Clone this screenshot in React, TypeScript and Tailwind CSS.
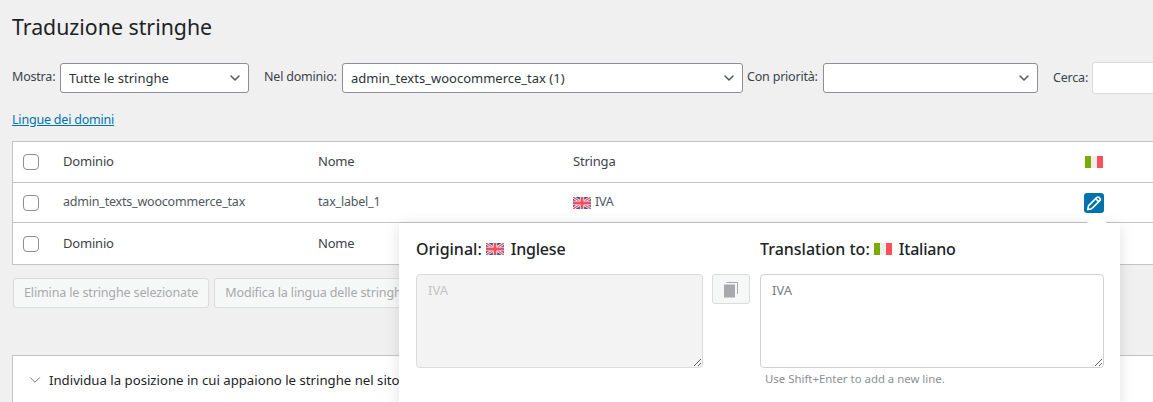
import { ChevronDown } from "lucide-react";

const FONT = "font-['Noto_Sans','Open_Sans',sans-serif]";
const COLS = "grid-cols-[40px_255px_255px_512px_1fr]";

function UkFlag() {
  return (
    <svg width="18" height="12" viewBox="0 0 18 12" className="shrink-0">
      <rect width="18" height="12" fill="#27559f" />
      <path d="M0 0L18 12M18 0L0 12" stroke="#f6f6f6" strokeWidth="2.8" />
      <path d="M0 0L18 12M18 0L0 12" stroke="#f0505f" strokeWidth="1.3" />
      <path d="M9 0V12M0 6H18" stroke="#f6f6f6" strokeWidth="4.4" />
      <path d="M9 0V12M0 6H18" stroke="#ef4f5e" strokeWidth="2.8" />
    </svg>
  );
}

function ItFlag() {
  return (
    <span className="flex h-3 w-[18px] shrink-0">
      <span className="flex-1 bg-[#78ac00]" />
      <span className="flex-1 bg-[#eeeeee]" />
      <span className="flex-1 bg-[#ff4f58]" />
    </span>
  );
}

function Check() {
  return (
    <input
      type="checkbox"
      className="h-4 w-4 appearance-none rounded-[4px] border border-[#8c8f94] bg-white"
    />
  );
}

function FakeSelect({ value, width }: { value?: string; width: string }) {
  return (
    <div
      className={`flex h-[30px] shrink-0 items-center justify-between rounded-[3px] border border-[#8c8f94] bg-white pl-2 pr-[5px] text-[13px] text-[#2c3338] ${width}`}
    >
      <span className="pt-[2px]">{value}</span>
      <ChevronDown size={16} strokeWidth={2.2} className="text-[#50575e]" />
    </div>
  );
}

function Label({ children, className }: { children: React.ReactNode; className: string }) {
  return (
    <span className={`shrink-0 -translate-y-px whitespace-nowrap text-[12.5px] tracking-[-0.2px] ${className}`}>
      {children}
    </span>
  );
}

export default function App() {
  return (
    <div className={`relative h-[402px] w-[1153px] overflow-hidden bg-[#f0f0f1] text-[12.5px] tracking-[-0.2px] text-[#3c434a] ${FONT}`}>
      <div className="w-[1180px] pl-3">
        <h1 className="pt-[11px] text-[21.3px] leading-[31px] tracking-normal text-[#1d2327]">Traduzione stringhe</h1>

        {/* Filters */}
        <div className="mt-[20px] flex items-center tracking-normal">
          <Label className="w-[48px]">Mostra:</Label>
          <FakeSelect value="Tutte le stringhe" width="w-[189px]" />
          <Label className="ml-[15px] w-[78px]">Nel dominio:</Label>
          <FakeSelect value="admin_texts_woocommerce_tax (1)" width="w-[401px]" />
          <Label className="ml-[4px] w-[76px]">Con priorità:</Label>
          <FakeSelect width="w-[215px]" />
          <Label className="ml-[15px] w-[39px] translate-y-0">Cerca:</Label>
          <div className="h-[32px] w-[100px] rounded-[3px] border border-[#dcdcde] bg-white" />
        </div>

        <div className="mt-[17px] leading-[18px]">
          <a href="#" className="text-[#0073aa] underline">Lingue dei domini</a>
        </div>

        {/* Strings table */}
        <div className="mt-[12px] h-[124px] border border-[#c3c4c7] bg-white">
          <div className={`grid h-[41px] ${COLS} items-center border-b border-[#c3c4c7] pl-[10px] text-[13px]`}>
            <Check />
            <span>Dominio</span>
            <span>Nome</span>
            <span>Stringa</span>
            <ItFlag />
          </div>
          <div className={`grid h-10 ${COLS} items-center border-b border-[#c3c4c7] pl-[10px] text-[#50575e]`}>
            <Check />
            <span>admin_texts_woocommerce_tax</span>
            <span>tax_label_1</span>
            <span className="flex items-center gap-[4px]">
              <UkFlag />
              IVA
            </span>
            <button className="-ml-px flex h-5 w-5 items-center justify-center rounded-[3px] bg-[#0073aa]">
              <svg width="18" height="18" viewBox="0 0 16 16" fill="none" stroke="white" strokeWidth="1.5" strokeLinejoin="round">
                <path d="M3.2 10.4L10.6 3a1.2 1.2 0 0 1 1.7 0l1 1a1.2 1.2 0 0 1 0 1.7L5.9 13.1 2.5 13.8z" />
                <path d="M9.6 4.2l2.5 2.5" />
              </svg>
            </button>
          </div>
          <div className={`grid h-[41px] ${COLS} items-center pl-[10px] text-[13px]`}>
            <Check />
            <span>Dominio</span>
            <span>Nome</span>
          </div>
        </div>

        {/* Bulk actions */}
        <div className="mt-[13px] flex gap-[5px] pl-px tracking-[-0.13px]">
          <button className="h-[30px] rounded-[3px] border border-[#dcdcde] bg-[#f6f7f7] px-[10px] pt-px text-[#a7aaad]">
            Elimina le stringhe selezionate
          </button>
          <button className="h-[30px] whitespace-nowrap rounded-[3px] border border-[#dcdcde] bg-[#f6f7f7] px-[10px] pt-px text-[#a7aaad]">
            Modifica la lingua delle stringhe selezionate
          </button>
        </div>

        {/* Location panel */}
        <div className="mt-[47px] h-[60px] border border-[#c3c4c7] bg-white pl-[13px] pt-[14px]">
          <div className="flex items-center gap-[5px] text-[13.2px] leading-5 tracking-normal text-[#1d2327]">
            <ChevronDown size={18} strokeWidth={1.2} className="text-[#646970]" />
            Individua la posizione in cui appaiono le stringhe nel sito
          </div>
        </div>
      </div>

      {/* Translation popover */}
      <div className="absolute left-[399px] top-[223px] h-[190px] w-[721px] bg-white pl-[17px] pr-4 pt-[14px] tracking-normal shadow-[0_2px_14px_rgba(0,0,0,0.12)]">
        <div className="absolute right-[13px] top-[-10px] h-0 w-0 border-x-[10px] border-b-[10px] border-x-transparent border-b-white" />
        <div className="grid grid-cols-[287px_57px_344px]">
          <div className="flex items-center gap-[4px] text-[16px] font-medium leading-6 text-[#1d2327]">
            Original: <UkFlag /> <span className="ml-[3px] tracking-[-0.2px]">Inglese</span>
          </div>
          <div />
          <div className="flex items-center gap-[4px] text-[16px] font-medium leading-6 text-[#1d2327]">
            Translation to: <ItFlag /> <span className="ml-[3px] tracking-[-0.2px]">Italiano</span>
          </div>
        </div>
        <div className="mt-[13px] grid grid-cols-[287px_57px_344px]">
          <textarea
            disabled
            defaultValue="IVA"
            className="h-[94px] rounded-[4px] border border-[#dcdcde] bg-[#f3f3f3] px-[11px] py-[6px] text-[13px] text-[#c3c4c7] outline-none"
          />
          <div className="pl-[9px]">
            <button className="flex h-[30px] w-[38px] items-center justify-center rounded-[3px] border border-[#dcdcde] bg-[#f6f7f7]">
              <svg width="16" height="17" viewBox="0 0 16 17">
                <path d="M3.5 1.5H14.5V13" fill="none" stroke="#a7aaad" strokeWidth="1" />
                <rect x="1" y="3.5" width="11" height="13" fill="#a7aaad" />
              </svg>
            </button>
          </div>
          <textarea
            defaultValue="IVA"
            className="h-[94px] rounded-[4px] border border-[#d0d1d3] bg-white px-[11px] py-[6px] text-[13px] text-[#787c82] outline-none"
          />
        </div>
        <div className="ml-[349px] mt-[3px] text-[11.4px] leading-4 text-[#8c8f94]">Use Shift+Enter to add a new line.</div>
      </div>
    </div>
  );
}
